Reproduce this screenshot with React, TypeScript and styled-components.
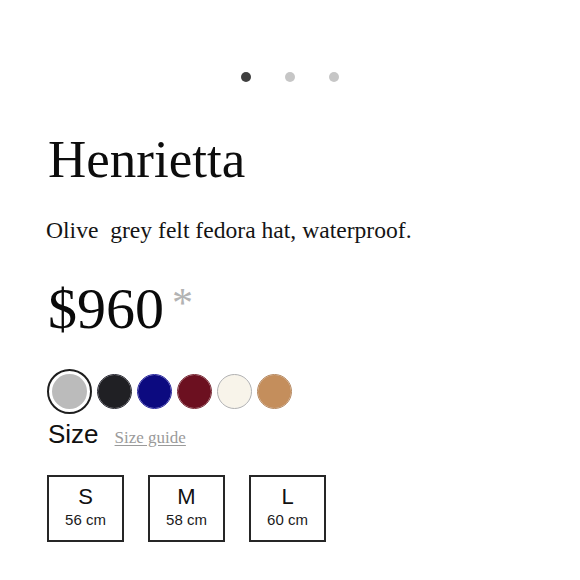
import React from "react";
import styled, { createGlobalStyle } from "styled-components";

const Global = createGlobalStyle`
  html, body { margin: 0; padding: 0; background: #fff; }
  body { width: 580px; height: 580px; overflow: hidden; }
`;

const Page = styled.div`
  box-sizing: border-box;
  width: 580px;
  height: 580px;
  padding: 72px 0 0 48px;
  display: flex;
  flex-direction: column;
  align-items: flex-start;
`;

const Dots = styled.div`
  align-self: stretch;
  margin-left: -48px;
  display: flex;
  justify-content: center;
  gap: 34px;
  height: 10px;
`;

const Dot = styled.span<{ $active?: boolean }>`
  width: 10px;
  height: 10px;
  border-radius: 50%;
  background: ${(p) => (p.$active ? "#3f3f3f" : "#c6c6c6")};
`;

const Title = styled.h1`
  margin: 51px 0 0 0;
  font-family: "Liberation Serif", "Times New Roman", serif;
  font-weight: 400;
  font-size: 53px;
  line-height: 1;
  color: #0d0d0d;
`;

const Description = styled.p`
  margin: 33px 0 0 -2px;
  font-family: "Liberation Serif", "Times New Roman", serif;
  font-size: 23.6px;
  line-height: 1;
  color: #141414;
  white-space: pre;
`;

const PriceRow = styled.div`
  margin-top: 37px;
  display: flex;
  align-items: flex-start;
`;

const Price = styled.span`
  font-family: "Liberation Serif", "Times New Roman", serif;
  font-size: 58px;
  line-height: 1;
  color: #0a0a0a;
`;

const Asterisk = styled.span`
  margin: 2px 0 0 8px;
  font-family: "Liberation Serif", "Times New Roman", serif;
  font-size: 42px;
  line-height: 1;
  color: #b3b3b3;
`;

const Swatches = styled.div`
  margin-top: 31px;
  display: flex;
  align-items: center;
  gap: 5px;
  margin-left: -1px;
`;

const Swatch = styled.span<{ $color: string; $selected?: boolean; $edge?: string }>`
  box-sizing: border-box;
  border-radius: 50%;
  width: ${(p) => (p.$selected ? 45 : 35)}px;
  height: ${(p) => (p.$selected ? 45 : 35)}px;
  background: ${(p) => p.$color};
  background-clip: content-box;
  padding: ${(p) => (p.$selected ? 3 : 0)}px;
  border: ${(p) =>
    p.$selected ? "2px solid #1e1e1e" : `1px solid ${p.$edge ?? p.$color}`};
`;

const SizeHeader = styled.div`
  margin-top: 7px;
  display: flex;
  align-items: baseline;
  gap: 16px;
`;

const SizeLabel = styled.span`
  font-family: "Liberation Sans", Arial, sans-serif;
  font-size: 26px;
  line-height: 1;
  color: #111;
`;

const SizeGuide = styled.a`
  font-family: "Liberation Serif", "Times New Roman", serif;
  font-size: 17px;
  line-height: 1;
  color: #9a9a9a;
  text-decoration: underline;
  text-underline-offset: 2px;
`;

const SizeOptions = styled.div`
  margin: 28px 0 0 -1px;
  display: flex;
  gap: 24px;
`;

const SizeBox = styled.div`
  box-sizing: border-box;
  width: 77px;
  height: 67px;
  border: 2px solid #262626;
  padding-top: 9px;
  display: flex;
  flex-direction: column;
  align-items: center;
  gap: 4px;
  font-family: "Liberation Sans", Arial, sans-serif;
  color: #111;
`;

const SizeLetter = styled.span`
  font-size: 22px;
  line-height: 1;
`;

const SizeCm = styled.span`
  font-size: 15px;
  line-height: 1;
  color: #1a1a1a;
`;

const colors = [
  { c: "#bbbbbb", sel: true },
  { c: "#202024", edge: "#2a2a34" },
  { c: "#0c0a80", edge: "#2a28a0" },
  { c: "#6c1020", edge: "#7a2a36" },
  { c: "#f8f4ea", edge: "#b0b0b0" },
  { c: "#c48e5c", edge: "#b5875e" },
];

const sizes = [
  { l: "S", cm: "56 cm" },
  { l: "M", cm: "58 cm" },
  { l: "L", cm: "60 cm" },
];

export default function App() {
  return (
    <>
      <Global />
      <Page>
        <Dots>
          <Dot $active />
          <Dot />
          <Dot />
        </Dots>
        <Title>Henrietta</Title>
        <Description>Olive  grey felt fedora hat, waterproof.</Description>
        <PriceRow>
          <Price>$960</Price>
          <Asterisk>*</Asterisk>
        </PriceRow>
        <Swatches>
          {colors.map((s, i) => (
            <Swatch key={i} $color={s.c} $selected={s.sel} $edge={s.edge} />
          ))}
        </Swatches>
        <SizeHeader>
          <SizeLabel>Size</SizeLabel>
          <SizeGuide>Size guide</SizeGuide>
        </SizeHeader>
        <SizeOptions>
          {sizes.map((s) => (
            <SizeBox key={s.l}>
              <SizeLetter>{s.l}</SizeLetter>
              <SizeCm>{s.cm}</SizeCm>
            </SizeBox>
          ))}
        </SizeOptions>
      </Page>
    </>
  );
}
